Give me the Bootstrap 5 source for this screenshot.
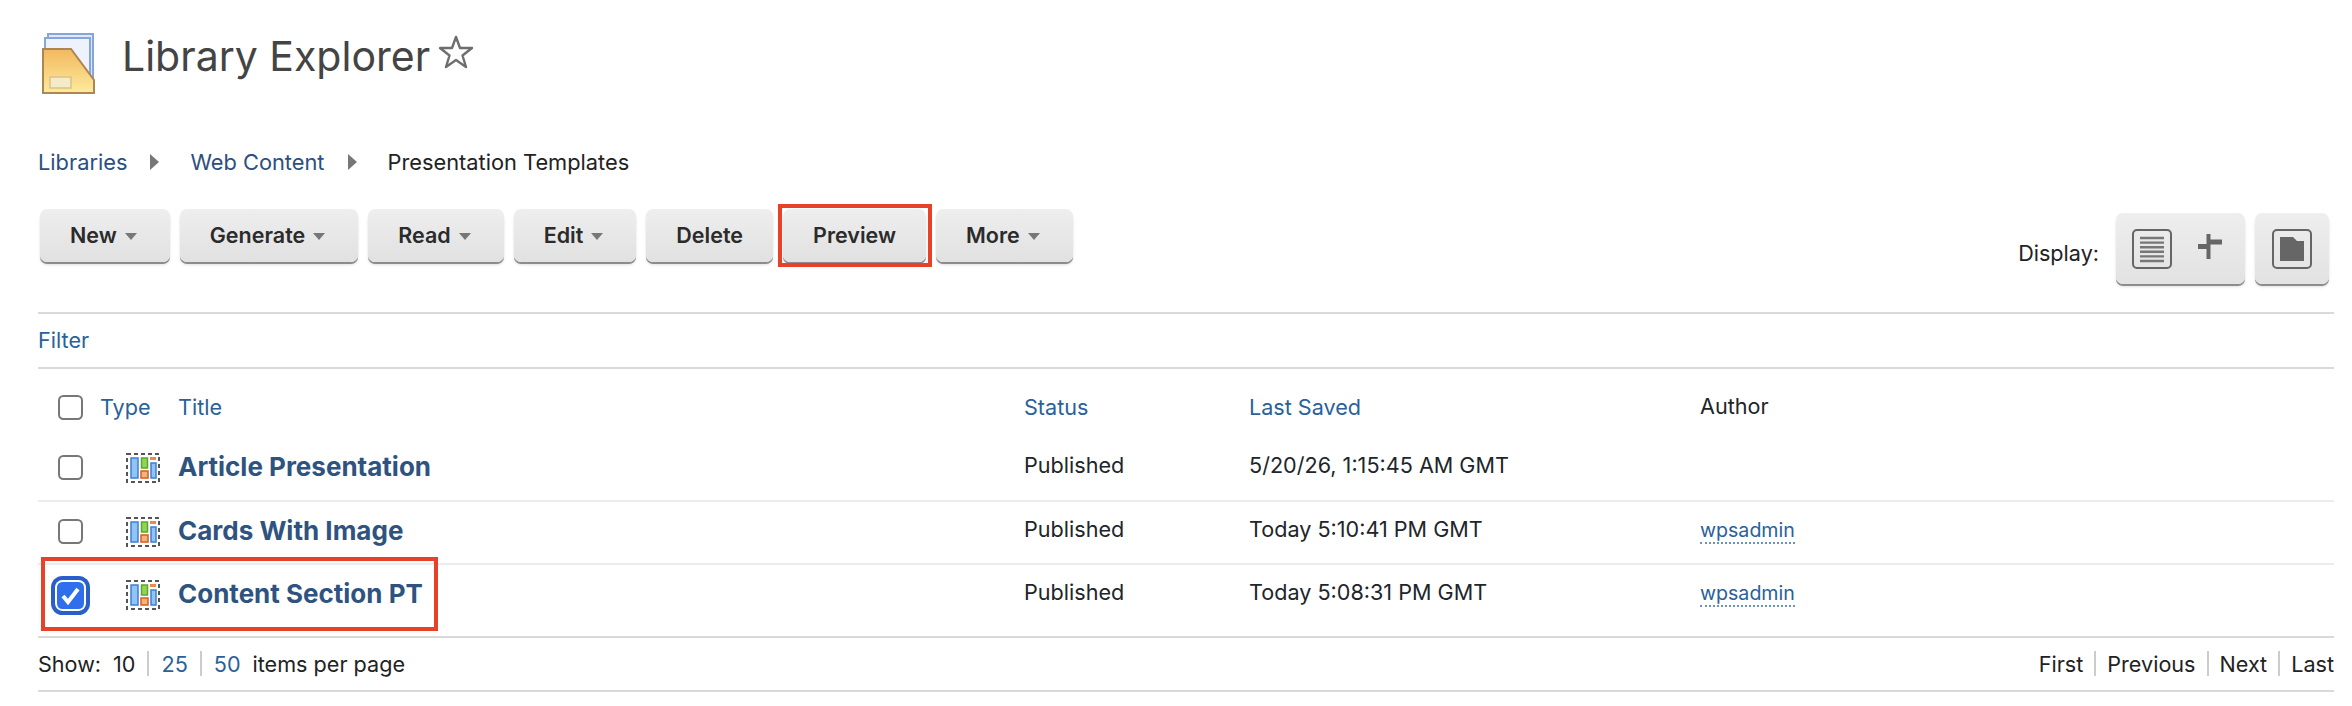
<!DOCTYPE html>
<html lang="en">
<head>
    <meta charset="UTF-8">
    <meta name="viewport" content="width=device-width, initial-scale=1.0">
    <title>Library Explorer</title>
    <link href="https://cdn.jsdelivr.net/npm/bootstrap@5.3.0/dist/css/bootstrap.min.css" rel="stylesheet">
    <style>
        body { font-family: Inter, "Liberation Sans", sans-serif; font-size: 21.6px; color: #222; background: #fff; }
        a { text-decoration: none; }
        .page-wrap { padding: 33px 18px 0 38px; }

        .page-head { height: 61px; padding-left: 4px; }
        .page-head svg.lib-icon { margin-right: 26px; }
        .page-title { font-size: 41px; font-weight: 400; color: #444; margin: 0; line-height: 48px; position: relative; top: -8px; }
        .fav-star { margin-left: 8px; align-self: flex-start; margin-top: 2px; }

        .crumbs { margin-top: 52px; height: 32px; line-height: 32px; font-size: 21.8px; }
        .crumbs a { color: #2b4f80; }
        .crumbs .crumb-sep { width: 0; height: 0; border-left: 9px solid #777; border-top: 8px solid transparent; border-bottom: 8px solid transparent; margin: 0 31px 0 23px; }

        .tool-row { margin-top: 30px; height: 100px; }
        .tool-group { gap: 10px; margin-left: 2px; }
        .tool-btn { font-family: inherit; font-size: 21.5px; font-weight: 600; color: #2b2b2b; background: linear-gradient(#eeeeee, #e1e1e1); border: 0; border-radius: 7px; box-shadow: 0 2px 0 #8c8c8c, 0 3px 3px rgba(0,0,0,.12); height: 53px; padding: 0 30px; margin-top: 1px; position: relative; }
        .tool-btn:hover, .tool-btn:active { background: linear-gradient(#eeeeee, #e1e1e1); color: #2b2b2b; }
        .tool-btn.dropdown-toggle { padding: 0 33px 0 30px; }
        .tool-btn.dropdown-toggle::after { color: #777; margin-left: 8px; vertical-align: 3px; border-top-width: 7px; border-left-width: 6px; border-right-width: 6px; }
        .red-outline::after { content: ""; position: absolute; inset: -5px -6px -5px -5px; border: 4px solid #e8412a; pointer-events: none; }

        .display-label { margin-right: 17px; margin-top: 29px; line-height: 32px; }
        .view-btn { background: linear-gradient(#eeeeee, #e2e2e2); border-radius: 7px; box-shadow: 0 2px 0 #8c8c8c, 0 3px 3px rgba(0,0,0,.12); height: 71px; margin-top: 5px; padding: 16px 17px 0; }
        .view-group { margin-right: 5px; gap: 10px; }
        .view-btn.split { column-gap: 26px; padding-right: 23px; padding-left: 16px; }

        .filter-bar { border-top: 2px solid #d9d9d9; border-bottom: 2px solid #d9d9d9; height: 57px; line-height: 53px; margin-top: 4px; }
        .filter-bar a { color: #2a6199; }

        .lib-table { table-layout: fixed; width: 100%; margin: 0; }
        .lib-table > :not(caption) > * > * { padding: 0; border: 0; background: transparent; color: inherit; box-shadow: none; vertical-align: top; font-weight: 400; }
        .lib-table .col-check { width: 62px; padding-left: 20px; }
        .lib-table .col-type { width: 78px; }
        .lib-table .col-title { width: 846px; }
        .lib-table .col-status { width: 225px; }
        .lib-table .col-saved { width: 451px; }
        .lib-table thead tr { height: 69px; }
        .lib-table thead th { padding-top: 25px; line-height: 24px; }
        .lib-table thead th.col-check { padding-top: 26px; }
        .lib-table thead a { color: #2a6199; position: relative; top: 1px; }
        .lib-table tbody tr { height: 63px; border-bottom: 2px solid #ececec; }
        .lib-table tbody tr:last-child { height: 72px; border-bottom: 0; }
        .lib-table tbody td { padding-top: 12px; line-height: 30px; }
        .lib-table tbody td.col-check { padding-top: 17px; }
        .lib-table tbody td.col-type { padding: 13px 0 0 26px; }
        .lib-table tbody td .row-title { position: relative; top: 2px; }
        .row-title { font-size: 26px; font-weight: 700; color: #2f5380; }
        .user-link { font-size: 19.6px; color: #2a6199; border-bottom: 2px dotted #6c93bd; line-height: 24px; display: inline-block; }

        .pick { width: 25px; height: 25px; margin: 0; border: 2px solid #777; border-radius: 4px; display: block; }
        .pick:checked { width: 27px; height: 27px; margin: 0 0 0 -1px; background-color: #2f6fed; background-size: 100%; background-image: url("data:image/svg+xml,%3csvg xmlns='http://www.w3.org/2000/svg' viewBox='0 0 27 27'%3e%3cpath fill='none' stroke='%23fff' stroke-width='4' d='M6 14l5 6 10-13'/%3e%3c/svg%3e"); border: 0; box-shadow: 0 0 0 2px #fff, 0 0 0 6px #2a5fc9; }

        .row-box { position: absolute; left: 3px; top: -8px; width: 397px; height: 74px; border: 4px solid #e8412a; pointer-events: none; }

        .pager { border-top: 2px solid #d9d9d9; border-bottom: 2px solid #d9d9d9; height: 56px; }
        .pager a { color: #2a6199; }
        .pager .pipe { border-right: 2px solid #ccc; height: 25px; display: inline-block; margin: 0 12px; }
        .pager-nav .pipe { margin: 0 11px; }
        .pager-nav a { color: #222; }
        .show-label { margin-right: 12px; }
        .per-page { margin-left: 12px; }
    </style>
</head>
<body>
<div class="page-wrap">
    <!-- heading -->
    <div class="page-head d-flex align-items-center">
        <svg class="lib-icon" width="54" height="61" viewBox="0 0 54 61">
            <defs>
                <linearGradient id="folderFill" x1="0" y1="0" x2="0" y2="1">
                    <stop offset="0" stop-color="#f2b85e"/>
                    <stop offset="1" stop-color="#fdeb9e"/>
                </linearGradient>
            </defs>
            <rect x="6" y="1" width="45" height="50" fill="#dfe9fa" stroke="#86a5dc" stroke-width="2"/>
            <rect x="3" y="5" width="45" height="46" fill="#edf2fc" stroke="#86a5dc" stroke-width="2"/>
            <path d="M1 16H29L52 47V60H1Z" fill="url(#folderFill)" stroke="#ad8650" stroke-width="2"/>
            <rect x="8" y="44" width="21" height="11" fill="#f3eccb" stroke="#dcc283" stroke-width="1.5"/>
        </svg>
        <h1 class="page-title">Library Explorer</h1>
        <svg class="fav-star" width="36" height="34" viewBox="0 0 36 34">
            <path d="M18 2L22 13H34L24.500 20.500L28 32L18 25L8 32L11.500 20.500L2 13H14Z" fill="none" stroke="#6e6e6e" stroke-width="2.400" stroke-linejoin="round"/>
        </svg>
    </div>

    <!-- breadcrumb -->
    <nav class="crumbs d-flex align-items-center">
        <a href="#">Libraries</a>
        <span class="crumb-sep"></span>
        <a href="#">Web Content</a>
        <span class="crumb-sep"></span>
        <span>Presentation Templates</span>
    </nav>

    <!-- toolbar -->
    <div class="tool-row d-flex justify-content-between align-items-start">
        <div class="tool-group d-flex">
            <button type="button" class="btn tool-btn dropdown-toggle">New</button>
            <button type="button" class="btn tool-btn dropdown-toggle">Generate</button>
            <button type="button" class="btn tool-btn dropdown-toggle">Read</button>
            <button type="button" class="btn tool-btn dropdown-toggle">Edit</button>
            <button type="button" class="btn tool-btn">Delete</button>
            <button type="button" class="btn tool-btn red-outline">Preview</button>
            <button type="button" class="btn tool-btn dropdown-toggle">More</button>
        </div>
        <div class="d-flex align-items-start">
            <span class="display-label">Display:</span>
            <div class="view-group d-flex">
                <div class="view-btn split d-flex">
                    <svg width="40" height="40" viewBox="0 0 40 40">
                        <rect x="1" y="1" width="38" height="38" rx="4" fill="none" stroke="#666" stroke-width="2"/>
                        <path d="M8 9H32M8 13.600H32M8 18.200H32M8 22.800H32M8 27.400H32M8 32H32" stroke="#777" stroke-width="2.400"/>
                    </svg>
                    <svg width="24" height="40" viewBox="0 0 24 40">
                        <path d="M10.500 5V30" stroke="#666" stroke-width="4"/>
                        <path d="M0 17.500H10M10 13H24" stroke="#666" stroke-width="5"/>
                    </svg>
                </div>
                <div class="view-btn">
                    <svg width="40" height="40" viewBox="0 0 40 40">
                        <rect x="1" y="1" width="38" height="38" rx="4" fill="none" stroke="#666" stroke-width="2"/>
                        <path d="M8 8H21L25 12H32V32H8Z" fill="#666"/>
                    </svg>
                </div>
            </div>
        </div>
    </div>

    <div class="filter-bar"><a href="#">Filter</a></div>

    <!-- SVG used for every row -->
    <svg class="d-none">
        <symbol id="ptIcon" viewBox="0 0 34 30">
            <rect x="1" y="1" width="32" height="28" fill="#fff" stroke="#555" stroke-width="2" stroke-dasharray="4 3"/>
            <rect x="5" y="5" width="7" height="20" fill="#92c3f2" stroke="#3d81d2" stroke-width="1.500"/>
            <rect x="15.500" y="5" width="6" height="10" fill="#93d64e" stroke="#5ca532" stroke-width="1.500"/>
            <rect x="15" y="18" width="7" height="7" fill="#f3b478" stroke="#d85a24" stroke-width="1.500"/>
            <rect x="24" y="4" width="6" height="3" fill="#ea8a4c"/>
            <rect x="25" y="10" width="5" height="15" fill="#92c3f2" stroke="#3d81d2" stroke-width="1.500"/>
        </symbol>
    </svg>

    <!-- results -->
    <table class="table lib-table">
        <thead>
            <tr>
                <th class="col-check"><input class="form-check-input pick" type="checkbox"></th>
                <th class="col-type"><a href="#">Type</a></th>
                <th class="col-title"><a href="#">Title</a></th>
                <th class="col-status"><a href="#">Status</a></th>
                <th class="col-saved"><a href="#">Last Saved</a></th>
                <th>Author</th>
            </tr>
        </thead>
        <tbody>
            <tr>
                <td class="col-check"><input class="form-check-input pick" type="checkbox"></td>
                <td class="col-type"><svg width="34" height="30"><use href="#ptIcon"/></svg></td>
                <td><a class="row-title" href="#">Article Presentation</a></td>
                <td>Published</td>
                <td>5/20/26, 1:15:45 AM GMT</td>
                <td></td>
            </tr>
            <tr>
                <td class="col-check"><input class="form-check-input pick" type="checkbox"></td>
                <td class="col-type"><svg width="34" height="30"><use href="#ptIcon"/></svg></td>
                <td><a class="row-title" href="#">Cards With Image</a></td>
                <td>Published</td>
                <td>Today 5:10:41 PM GMT</td>
                <td><a class="user-link" href="#">wpsadmin</a></td>
            </tr>
            <tr>
                <td class="col-check position-relative"><input class="form-check-input pick" type="checkbox" checked><span class="row-box"></span></td>
                <td class="col-type"><svg width="34" height="30"><use href="#ptIcon"/></svg></td>
                <td><a class="row-title" href="#">Content Section PT</a></td>
                <td>Published</td>
                <td>Today 5:08:31 PM GMT</td>
                <td><a class="user-link" href="#">wpsadmin</a></td>
            </tr>
        </tbody>
    </table>

    <!-- pager -->
    <div class="pager d-flex justify-content-between align-items-center">
        <div class="d-flex align-items-center">
            <span class="show-label">Show:</span>
            <span>10</span><span class="pipe"></span>
            <a href="#">25</a><span class="pipe"></span>
            <a href="#">50</a>
            <span class="per-page">items per page</span>
        </div>
        <div class="pager-nav d-flex align-items-center">
            <a href="#">First</a><span class="pipe"></span>
            <a href="#">Previous</a><span class="pipe"></span>
            <a href="#">Next</a><span class="pipe"></span>
            <a href="#">Last</a>
        </div>
    </div>
</div>
<script src="https://cdn.jsdelivr.net/npm/bootstrap@5.3.0/dist/js/bootstrap.bundle.min.js"></script>
</body>
</html>
